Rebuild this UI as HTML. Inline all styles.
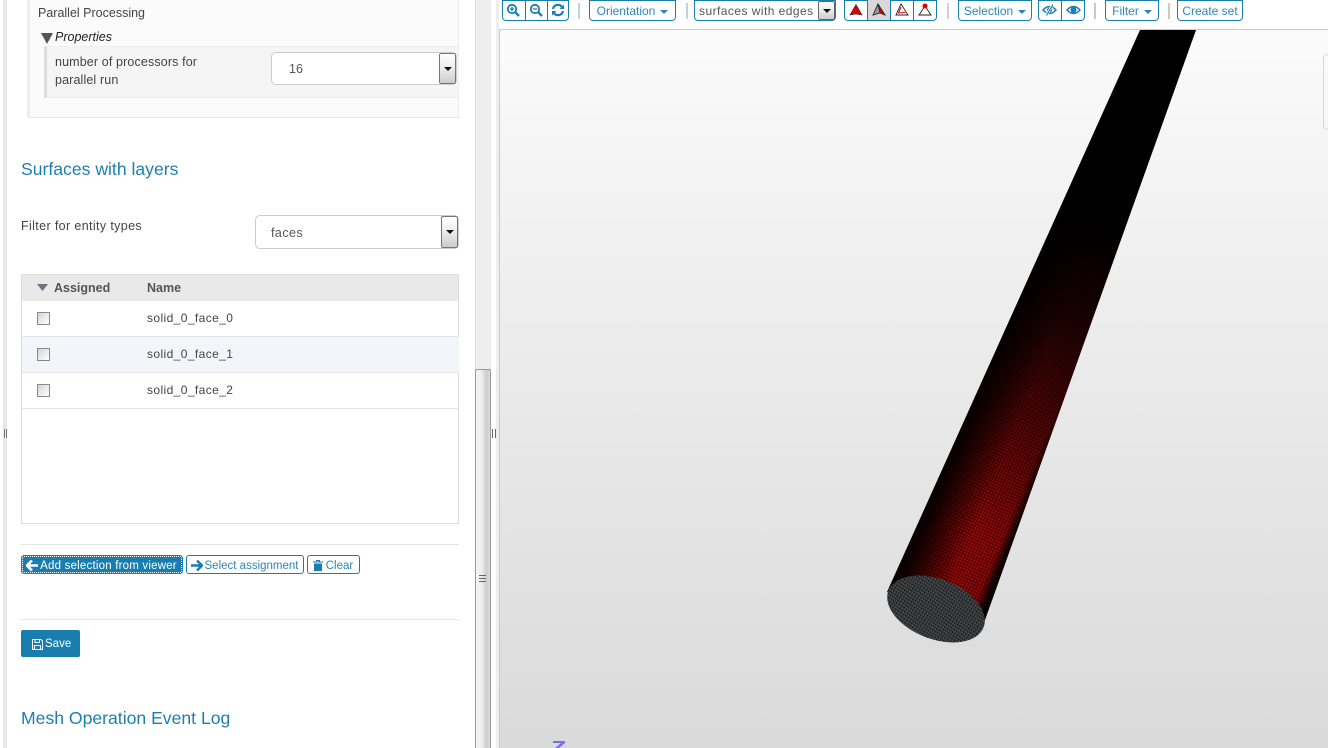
<!DOCTYPE html>
<html><head><meta charset="utf-8"><style>
html,body{margin:0;padding:0;width:1328px;height:748px;overflow:hidden;background:#fff}
body{font-family:"Liberation Sans",sans-serif;font-size:12.5px;color:#444;position:relative}
.a{position:absolute;box-sizing:border-box;white-space:nowrap}
.h{color:#1f7eb0;font-size:17.6px;line-height:22px}
.sel{background:#fff;border:1px solid #ccc;border-radius:5px}
.arr{position:absolute;top:0;right:0;bottom:0;width:17px;box-sizing:border-box;border:1px solid #777;border-radius:2px;background:linear-gradient(#fff,#eee 45%,#ccc)}
.arr:after{content:"";position:absolute;left:4px;top:13px;border:4px solid transparent;border-top:4px solid #111;border-bottom:0}
.row{left:22px;width:437px;height:36px;border-bottom:1px solid #e4e4e4;line-height:35px}
.cb{position:absolute;left:15px;top:11px;width:13px;height:13px;border:1px solid #888;background:linear-gradient(135deg,#d4d4d4,#fff);box-sizing:border-box}
.nm{position:absolute;left:125px;color:#444;font-size:12px;letter-spacing:.4px;top:0}
.b{height:19px;border:1px solid #1a7db0;border-radius:3px;background:#fff;color:#2b86b8;font-size:11.5px;line-height:20px;text-align:center}
.tb{top:0;height:21px;border:1px solid #1a7db0;border-radius:0 0 4px 4px;background:#fff;color:#2b86b8;font-size:12px;line-height:20px;text-align:center}
.sp{top:3px;width:2px;height:16px;background:linear-gradient(90deg,#cfd9e2,#c8c8c8)}
.caret{display:inline-block;margin-left:5px;vertical-align:1px;border:4px solid transparent;border-top:4px solid #2b86b8;border-bottom:0}
svg{display:block}
</style></head><body>

<!-- far-left strip -->
<div class="a" style="left:3px;top:0;width:4px;height:748px;background:#e8e8e8"></div>
<div class="a" style="left:4px;top:429px;width:3px;height:9px;border-left:1px solid #777;border-right:1px solid #777"></div>

<!-- Parallel panel -->
<div class="a" style="left:27px;top:0;width:432px;height:118px;background:#fbfbfb;border-left:3px solid #eee;border-right:1px solid #eee;border-bottom:1px solid #e8e8e8"></div>
<div class="a" style="left:38px;top:5px;line-height:17px">Parallel Processing</div>
<svg class="a" style="left:41px;top:33px" width="12" height="11"><path d="M0 0H12L6 11Z" fill="#555"/></svg>
<div class="a" style="left:55px;top:29px;line-height:17px;font-style:italic;color:#222">Properties</div>
<div class="a" style="left:44px;top:46px;width:414px;height:52px;background:#f5f5f5;border-left:3px solid #ddd;border-top:1px solid #eee;border-bottom:1px solid #eee"></div>
<div class="a" style="left:55px;top:53px;line-height:18px;letter-spacing:.13px">number of processors for<br>parallel run</div>
<div class="a sel" style="left:271px;top:52px;width:186px;height:33px"><span style="position:absolute;left:17px;top:9px;font-size:12.500px;color:#555">16</span><div class="arr"></div></div>

<!-- Surfaces -->
<div class="a h" style="left:21px;top:158px">Surfaces with layers</div>
<div class="a" style="left:21px;top:218px;line-height:17px;letter-spacing:.37px">Filter for entity types</div>
<div class="a sel" style="left:255px;top:215px;width:204px;height:34px"><span style="position:absolute;left:15px;top:10px;font-size:12.500px;letter-spacing:.45px;color:#555">faces</span><div class="arr"></div></div>

<!-- Table -->
<div class="a" style="left:21px;top:274px;width:438px;height:250px;border:1px solid #ddd"></div>
<div class="a" style="left:22px;top:275px;width:436px;height:26px;background:#e9e9e9;font-weight:bold;color:#555;font-size:12.500px;line-height:26px">
<svg class="a" style="left:15px;top:9px" width="11" height="7"><path d="M0 0H11L5.500 7Z" fill="#6b7280"/></svg>
<span style="position:absolute;left:32px">Assigned</span><span style="position:absolute;left:125px">Name</span></div>
<div class="a row" style="top:301px"><div class="cb"></div><span class="nm">solid_0_face_0</span></div>
<div class="a row" style="top:337px;background:#f2f6fa"><div class="cb"></div><span class="nm">solid_0_face_1</span></div>
<div class="a row" style="top:373px"><div class="cb"></div><span class="nm">solid_0_face_2</span></div>

<div class="a" style="left:21px;top:544px;width:438px;height:1px;background:#e6e6e6"></div>

<!-- Buttons -->
<div class="a b" style="left:21px;top:555px;width:162px;background:#1a7db0;color:#fff;outline:1px dotted #fff;outline-offset:-2px;padding-left:13px;letter-spacing:.2px">Add selection from viewer
<svg class="a" style="left:4px;top:4px" width="13" height="11"><path d="M6 0.500 1 5.500 6 10.500M1.500 5.500H12" fill="none" stroke="#fff" stroke-width="2.600"/></svg></div>
<div class="a b" style="left:186px;top:555px;width:118px;padding-left:13px">Select assignment
<svg class="a" style="left:4px;top:4px" width="12" height="11"><path d="M6 0.500 11 5.500 6 10.500M10.500 5.500H0" fill="none" stroke="#1a7db0" stroke-width="2.400"/></svg></div>
<div class="a b" style="left:307px;top:555px;width:53px;padding-left:12px">Clear
<svg class="a" style="left:5px;top:4px" width="10" height="11"><path d="M0 2H10M3.500 1.500V.5H6.500V1.500" stroke="#1a7db0" fill="none"/><path d="M1 3.500H9V11H1Z" fill="#1a7db0"/></svg></div>

<div class="a" style="left:21px;top:619px;width:438px;height:1px;background:#e6e6e6"></div>

<div class="a" style="left:21px;top:630px;width:59px;height:27px;background:#1a7db0;border-radius:2px;color:#fff;font-size:11.500px;line-height:29px;padding-left:24px">Save
<svg class="a" style="left:11px;top:9px" width="11" height="11"><path d="M.5.500H9L10.500 2V10.500H.5ZM3 .5V3.500H7.500V.5M2.500 10.500V6.500H8.500V10.500" fill="none" stroke="#fff"/></svg></div>

<div class="a h" style="left:21px;top:707px">Mesh Operation Event Log</div>

<!-- Scrollbar -->
<div class="a" style="left:475px;top:0;width:16px;height:748px;background:#eee;border-left:1px solid #ddd"></div>
<div class="a" style="left:475px;top:369px;width:16px;height:379px;background:linear-gradient(90deg,#f4f4f4,#eee 40%,#ccc 75%,#ddd);border:1px solid #999;border-bottom:0;border-radius:2px 2px 0 0"></div>
<div class="a" style="left:479px;top:575px;width:7px;height:8px;background:repeating-linear-gradient(#666 0 1px,transparent 1px 3px)"></div>
<div class="a" style="left:492px;top:429px;width:4px;height:9px;border-left:1px solid #666;border-right:1px solid #666"></div>
<div class="a" style="left:496px;top:0;width:3px;height:748px;background:#eee"></div>

<!-- Toolbar -->
<div class="a tb" style="left:502px;width:67px"></div>
<div class="a" style="left:525px;top:0;width:1px;height:20px;background:#1a7db0"></div>
<div class="a" style="left:547px;top:0;width:1px;height:20px;background:#1a7db0"></div>
<svg class="a" style="left:506px;top:3px" width="14" height="14"><circle cx="6" cy="6" r="4.200" fill="none" stroke="#1f7eb0" stroke-width="1.800"/><path d="M9 9 13 13" stroke="#1f7eb0" stroke-width="2.400"/><path d="M3.800 6H8.200M6 3.800V8.200" stroke="#1f7eb0" stroke-width="1.300"/></svg>
<svg class="a" style="left:529px;top:3px" width="14" height="14"><circle cx="6" cy="6" r="4.200" fill="none" stroke="#1f7eb0" stroke-width="1.800"/><path d="M9 9 13 13" stroke="#1f7eb0" stroke-width="2.400"/><path d="M3.800 6H8.200" stroke="#1f7eb0" stroke-width="1.300"/></svg>
<svg class="a" style="left:551px;top:3px" width="14" height="14"><path d="M2 6A5 5 0 0 1 11 4M12 8A5 5 0 0 1 3 10" fill="none" stroke="#1f7eb0" stroke-width="2.200"/><path d="M8.500 6H13V1.500ZM5.500 8H1V12.500Z" fill="#1f7eb0"/></svg>

<div class="a sp" style="left:578px"></div>
<div class="a tb" style="left:589px;width:87px">Orientation<span class="caret"></span></div>
<div class="a sp" style="left:686px"></div>
<div class="a tb" style="left:694px;width:142px;text-align:left;padding-left:4px;color:#555;font-size:12px;letter-spacing:.45px;line-height:20px">surfaces with edges
<div style="position:absolute;right:0;top:0;width:17px;height:19px;border:1px solid #666;border-radius:2px;background:linear-gradient(#fff,#eee 45%,#ccc);box-sizing:border-box"><div style="position:absolute;left:4px;top:7px;border:4px solid transparent;border-top:4px solid #111;border-bottom:0"></div></div></div>

<div class="a tb" style="left:844px;width:93px"></div>
<div class="a" style="left:867px;top:0;width:24px;height:20px;background:#d8d8d8;border-left:1px solid #1a7db0;border-right:1px solid #1a7db0"></div>
<div class="a" style="left:913px;top:0;width:1px;height:20px;background:#1a7db0"></div>
<svg class="a" style="left:849px;top:3px" width="14" height="14"><path d="M7 1.500 13 12 7 11 1 12Z" fill="#e00000" stroke="#222" stroke-width=".6"/></svg>
<svg class="a" style="left:872px;top:3px" width="14" height="14"><path d="M6 1 8 10 13 12Z" fill="#e00000"/><path d="M6 1 8 10 1 12Z" fill="#999"/><path d="M6 1 13 12 8 10 1 12ZM6 1 8 10" fill="none" stroke="#222" stroke-width=".9"/></svg>
<svg class="a" style="left:895px;top:3px" width="14" height="14"><path d="M6 1 13 12H1Z" fill="#fff" stroke="#222" stroke-width=".9"/><path d="M6 4 3.500 10 10 9.500" fill="none" stroke="#d00" stroke-width="1"/></svg>
<svg class="a" style="left:918px;top:3px" width="14" height="14"><path d="M7 3 13 12H1Z" fill="#fff" stroke="#222" stroke-width=".9"/><circle cx="7" cy="3" r="2.500" fill="#e00000"/></svg>

<div class="a sp" style="left:947px"></div>
<div class="a tb" style="left:958px;width:74px">Selection<span class="caret"></span></div>
<div class="a tb" style="left:1038px;width:47px"></div>
<div class="a" style="left:1061px;top:0;width:1px;height:20px;background:#1a7db0"></div>
<svg class="a" style="left:1042px;top:4px" width="15" height="12"><path d="M1 6Q7.500-1 14 6Q7.500 13 1 6Z" fill="none" stroke="#1f7eb0" stroke-width="1.500"/><circle cx="7.500" cy="6" r="2.500" fill="#1f7eb0"/><path d="M11 0 4 12" stroke="#fff" stroke-width="2.500"/><path d="M11 0.500 4.500 11.500" stroke="#1f7eb0" stroke-width="1.200"/></svg>
<svg class="a" style="left:1066px;top:4px" width="15" height="12"><path d="M1 6Q7.500-1 14 6Q7.500 13 1 6Z" fill="none" stroke="#1f7eb0" stroke-width="1.500"/><circle cx="7.500" cy="6" r="3" fill="#1f7eb0"/></svg>

<div class="a sp" style="left:1094px;background:linear-gradient(90deg,#c8b8a8,#c8d4e0)"></div>
<div class="a tb" style="left:1105px;width:54px">Filter<span class="caret"></span></div>
<div class="a sp" style="left:1168px;background:linear-gradient(90deg,#d8c0a8,#c8d4e0)"></div>
<div class="a tb" style="left:1177px;width:66px">Create set</div>

<!-- Viewer -->
<div class="a" style="left:499px;top:29px;width:829px;height:719px;background:linear-gradient(#fbfbfb,#f0f0f0 30%,#dadada);border-left:1px solid #ccc;border-top:1px solid #ccc"></div>
<div class="a" style="left:1323px;top:54px;width:10px;height:76px;border:1px solid #c5e0ea;border-radius:4px"></div>

<svg class="a" style="left:499px;top:30px" width="829" height="718" viewBox="499 30 829 718">
<defs>
<pattern id="m" width="3" height="3" patternUnits="userSpaceOnUse" patternTransform="rotate(24)">
<rect width="3" height="3" fill="#a00606"/><path d="M0 0H3M0 0V3" stroke="#180000" stroke-width="1"/>
</pattern>
<pattern id="f" width="3" height="3" patternUnits="userSpaceOnUse" patternTransform="rotate(12)">
<rect width="3" height="3" fill="#34383a"/><rect width="1" height="1" fill="#0a0a0a"/><rect x="2" y="1" width="1" height="1" fill="#5c5f60"/>
</pattern>
<linearGradient id="along" gradientUnits="userSpaceOnUse" x1="1095" y1="225" x2="970" y2="530">
<stop offset="0" stop-color="#000"/><stop offset=".3" stop-color="#3a3a3a"/><stop offset=".65" stop-color="#999"/><stop offset="1" stop-color="#fff"/>
</linearGradient>
<linearGradient id="across" gradientUnits="userSpaceOnUse" x1="905" y1="530" x2="1000" y2="570">
<stop offset="0" stop-color="#000"/><stop offset=".18" stop-color="#222"/><stop offset=".42" stop-color="#999"/><stop offset=".62" stop-color="#fff"/><stop offset=".9" stop-color="#eee"/><stop offset="1" stop-color="#111"/>
</linearGradient>
<mask id="ma" maskUnits="userSpaceOnUse" x="499" y="30" width="829" height="718"><rect x="499" y="30" width="829" height="718" fill="url(#along)"/></mask>
<mask id="mb" maskUnits="userSpaceOnUse" x="499" y="30" width="829" height="718"><rect x="499" y="30" width="829" height="718" fill="url(#across)"/></mask>
</defs>
<path d="M1140 30H1196L985 620 887 592Z" fill="#000"/>
<g mask="url(#mb)"><path d="M1140 30H1196L985 620 887 592Z" fill="url(#m)" mask="url(#ma)"/></g>
<ellipse cx="936" cy="609" rx="51" ry="30" transform="rotate(21 936 609)" fill="url(#f)"/>
<path d="M553 741H565V743L559 748H555L561 743H553Z" fill="#7b6cf0"/>
</svg>

</body></html>
